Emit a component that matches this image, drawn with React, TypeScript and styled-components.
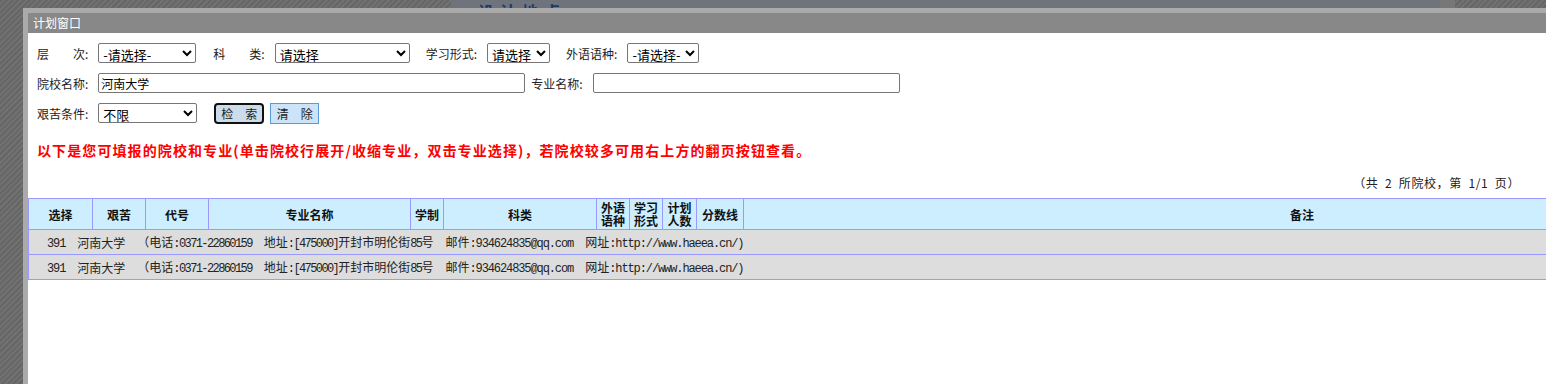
import React from 'react';
import styled, { createGlobalStyle } from 'styled-components';

const GlobalStyle = createGlobalStyle`
  html, body { margin: 0; padding: 0; }
  body { font-family: "Noto Sans CJK SC", "Liberation Sans", sans-serif; }
`;

const CJK = '"Noto Sans CJK SC", "Liberation Sans", sans-serif';

const Page = styled.div`
  width: 1546px;
  height: 384px;
  overflow: hidden;
  background: repeating-linear-gradient(135deg, #666 0 2px, #717171 2px 4px);
`;

const Backdrop = styled.div`
  display: flex;
  height: 8px;
  padding-left: 451px;
`;

const BackPanel = styled.div`
  width: 989px;
  height: 8px;
  overflow: hidden;
  background: #6e737c;
  padding-left: 27px;
  box-sizing: border-box;
  color: #1d3a66;
  font: bold 16px/16px ${CJK};
  letter-spacing: 6px;
  padding-top: 3px;
`;

const BackTab = styled.div`
  width: 15px;
  height: 8px;
  background: #777;
`;

const Dialog = styled.div`
  margin-left: 23px;
  width: 1845px;
  height: 420px;
  border: 5px solid #aaa;
  border-right: 0;
  background: #fff;
`;

const TitleBar = styled.div`
  height: 20px;
  padding-left: 5px;
  background: #888;
  color: #fff;
  font: 12px/20px ${CJK};
`;

const Form = styled.div`
  display: flex;
  flex-direction: column;
  gap: 10px;
  padding: 10px 0 0 9px;
`;

const Row = styled.div<{ $gap: number }>`
  display: flex;
  align-items: center;
  height: 20px;
  gap: ${(p) => p.$gap}px;
`;

const Field = styled.label<{ $trail?: number }>`
  display: flex;
  align-items: center;
  margin-right: ${(p) => p.$trail ?? 0}px;
  font: 12px ${CJK};
  color: #222;
  white-space: pre;
`;

const Caption = styled.span`
  margin-right: 10px;
`;

const Select = styled.select<{ $w: number }>`
  width: ${(p) => p.$w}px;
  height: 20px;
  padding: 0;
  font: 13px ${CJK};
  color: #000;
  background: #fff;
  border: 1px solid #767676;
  border-radius: 2px;
`;

const TextInput = styled.input<{ $w: number }>`
  width: ${(p) => p.$w}px;
  height: 20px;
  box-sizing: border-box;
  padding: 0 2px;
  font: 12px ${CJK};
  color: #000;
  border: 1px solid #767676;
  border-radius: 2px;
`;

const Button = styled.button<{ $focused?: boolean }>`
  width: ${(p) => (p.$focused ? 50 : 49)}px;
  height: 21px;
  padding: 0;
  font: 12px ${CJK};
  color: #222;
  background: ${(p) => (p.$focused ? '#cbdcea' : '#cce4f7')};
  border: ${(p) => (p.$focused ? '2px solid #111' : '1px solid #5a9bd5')};
  border-radius: ${(p) => (p.$focused ? 4 : 0)}px;
  white-space: pre;
`;

const Notice = styled.div`
  margin: 17px 0 0 9px;
  color: #f00;
  font: bold 14px/20px ${CJK};
  letter-spacing: 1.1px;
`;

const Pager = styled.div`
  width: 1492px;
  margin-top: 15px;
  text-align: right;
  font: 12px/16px ${CJK};
  letter-spacing: 0.6px;
  color: #222;
  white-space: pre;
`;

const Table = styled.table`
  margin-top: 7px;
  width: 1832px;
  table-layout: fixed;
  border-collapse: collapse;
  border: 1px solid #9999ff;
`;

const HeadCell = styled.th`
  height: 30px;
  padding: 0;
  background: #cdeeff;
  border: 1px solid #9999ff;
  font: bold 12px/13px ${CJK};
  color: #111;
  text-align: center;
`;

const BodyRow = styled.tr`
  background: #dddddd;
`;

const BodyCell = styled.td`
  height: 24px;
  padding: 0 0 0 18px;
  border: 1px solid #9999ff;
  font: 12px ${CJK};
  color: #222;
`;

const Line = styled.div`
  display: flex;
  align-items: center;
  gap: 12px;
  white-space: pre;
`;

const Ascii = styled.span<{ $tight?: boolean }>`
  font-family: "Liberation Mono", monospace;
  font-size: 12px;
  letter-spacing: ${(p) => (p.$tight ? -1.6 : -1.1)}px;
`;

const columns: [string, number][] = [
  ['选择', 64], ['艰苦', 53], ['代号', 63], ['专业名称', 202], ['学制', 33],
  ['科类', 153], ['外语语种', 33], ['学习形式', 33], ['计划人数', 34], ['分数线', 47], ['备注', 1117],
];

const mixed = (text: string, tight?: boolean) =>
  text.split(/([\x21-\x7e]+)/).filter(Boolean).map((part, i) =>
    /^[\x21-\x7e]+$/.test(part) ? <Ascii key={i} $tight={tight}>{part}</Ascii> : part);

const segments: [string, boolean][] = [
  ['391', false],
  ['河南大学', false],
  ['（电话:0371-22860159', true],
  ['地址:[475000]开封市明伦街85号', true],
  ['邮件:934624835@qq.com', false],
  ['网址:http://www.haeea.cn/)', false],
];

const SchoolRow: React.FC = () => (
  <BodyRow>
    <BodyCell colSpan={columns.length}>
      <Line>
        {segments.map(([t, tight]) => <span key={t}>{mixed(t, tight)}</span>)}
      </Line>
    </BodyCell>
  </BodyRow>
);

const App: React.FC = () => (
  <Page>
    <GlobalStyle />
    <Backdrop>
      <BackPanel>设计地点</BackPanel>
      <BackTab />
    </Backdrop>
    <Dialog>
      <TitleBar>计划窗口</TitleBar>
      <Form>
        <Row $gap={16}>
          <Field $trail={1}>
            <Caption>层　　次:</Caption>
            <Select $w={98} defaultValue=""><option value="">-请选择-</option></Select>
          </Field>
          <Field>
            <Caption>科　　类:</Caption>
            <Select $w={135} defaultValue=""><option value="">请选择</option></Select>
          </Field>
          <Field>
            <Caption>学习形式:</Caption>
            <Select $w={63} defaultValue=""><option value="">请选择</option></Select>
          </Field>
          <Field>
            <Caption>外语语种:</Caption>
            <Select $w={72} defaultValue=""><option value="">-请选择-</option></Select>
          </Field>
        </Row>
        <Row $gap={6}>
          <Field>
            <Caption>院校名称:</Caption>
            <TextInput $w={427} defaultValue="河南大学" />
          </Field>
          <Field>
            <Caption>专业名称:</Caption>
            <TextInput $w={307} defaultValue="" />
          </Field>
        </Row>
        <Row $gap={6}>
          <Field $trail={11}>
            <Caption>艰苦条件:</Caption>
            <Select $w={99} defaultValue=""><option value="">不限</option></Select>
          </Field>
          <Button $focused>检　索</Button>
          <Button>清　除</Button>
        </Row>
      </Form>
      <Notice>以下是您可填报的院校和专业(单击院校行展开/收缩专业，双击专业选择)，若院校较多可用右上方的翻页按钮查看。</Notice>
      <Pager>（共  2  所院校，第  1/1  页）</Pager>
      <Table>
        <colgroup>
          {columns.map(([name, w]) => <col key={name} style={{ width: w }} />)}
        </colgroup>
        <thead>
          <tr>
            {columns.map(([name]) => <HeadCell key={name}>{name}</HeadCell>)}
          </tr>
        </thead>
        <tbody>
          <SchoolRow />
          <SchoolRow />
        </tbody>
      </Table>
    </Dialog>
  </Page>
);

export default App;
